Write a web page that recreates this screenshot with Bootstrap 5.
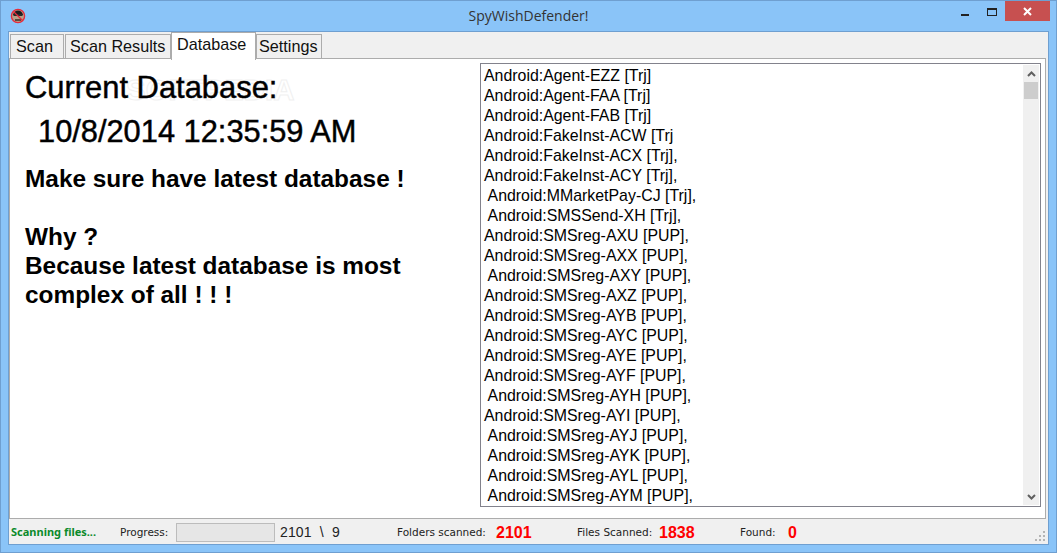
<!DOCTYPE html>
<html lang="en"><head><meta charset="utf-8"><title>SpyWishDefender!</title>
<link rel="stylesheet" href="https://cdn.jsdelivr.net/npm/bootstrap@5.3.0/dist/css/bootstrap.min.css">
<style>
html,body{height:553px;overflow:hidden}
body{font-family:"Liberation Sans",Arial,sans-serif;color:#000;background:#8ac4f8}
.app-window{width:1057px;height:553px;border:1px solid #6f9fd0;padding:0 7px 7px}
.title-bar{height:30px;flex:none}
.title-name{font-size:14px;color:#333;left:0;right:0;top:6px;line-height:18px;text-align:center;font-family:"Open Sans",sans-serif}
.app-icon{margin:7px 0 0 2px}
.win-ctrl{width:26px;height:20px}
.win-ctrl-max{width:27px}
.win-close{width:45px;background:#c75050;margin-right:-1px}
.client{flex:1 1 0;min-height:0;background:#f0f0f0;border:1px solid #6f9fd0}
.tab-strip{height:26px;flex:none;padding:2px 0 0 1px;gap:1px}
.tab-item{height:25px;padding:0 0 0 5px;background:#f0f0f0;border:1px solid #acacac;border-bottom:0;font-size:16.2px;line-height:22px;color:#111}
.tab-a{width:54px}
.tab-b{width:106px;padding-left:4px}
.tab-c{width:66px;padding-left:2px}
.tab-on{width:85px;height:28px;margin:-2px -1px 0 -1px;padding-left:5px;background:#fff;line-height:23px;position:relative;z-index:1}
.tab-page{flex:1 1 0;min-height:0;background:#fff;border:1px solid #acacac;margin-right:2px;padding:4px 4px 11px 15px}
.left-pane{width:455px;flex:none}
.db-head{font-size:30.9px;line-height:34px;margin:8px 0 0 0;-webkit-text-stroke:.45px #000;font-weight:400;position:relative}
.db-date{font-size:30.8px;line-height:34px;margin:10px 0 0 13px;-webkit-text-stroke:.45px #000;font-weight:400}
.db-note{font-size:24.4px;line-height:29px;font-weight:700;margin:0}
.db-note-a{margin-top:15px}
.db-note-b{margin-top:29px}
.mark-soft{left:101px;top:6px;font-size:29px;font-weight:700;color:#fff;-webkit-text-stroke:1px #f0f0f0;letter-spacing:.3px}
.db-list{border:1px solid #82828c;background:#fff;min-width:0}
.db-lines{padding:2px 0 0 3px;font-size:15.9px;line-height:20px;overflow:hidden;white-space:pre}
.sbar{width:16px;background:#f0f0f0;margin:1px}
.sbtn{height:17px;color:#606060}
.sthumb{height:17px;background:#cdcdcd;margin:0 1px}
.status-bar{height:25px;flex:none;font-family:"DejaVu Sans",sans-serif;font-size:10.5px;color:#222;padding-top:2px;position:relative}
.st-green{color:#0a8a2a;font-weight:700;font-family:"Noto Sans",sans-serif;font-size:11px;margin-left:2px;width:109px}
.st-prog-lbl{width:48px}
.st-progress{width:99px;height:19px;background:#e6e6e6;border:1px solid #bcbcbc;margin:0 5px 0 8px}
.st-count{font-family:"Liberation Sans",sans-serif;font-size:14px;width:117px;letter-spacing:.15px}
.st-folders{width:99px}
.st-files{width:82px}
.st-found{width:48px}
.st-red{color:#f00;font-weight:700;font-family:"Liberation Sans",sans-serif;font-size:16px}
.st-num{width:81px}
.grip{right:2px;bottom:2px}
</style></head>
<body>
<div class="app-window d-flex flex-column position-relative">
  <div class="title-bar d-flex justify-content-between position-relative">
    <svg class="app-icon" width="16" height="16" viewBox="0 0 16 16"><circle cx="8" cy="8" r="6.600" fill="#b8a088"/><path d="M3 7Q4 2.500 8 2.500T13 7Z" fill="#1c1c1c"/><rect x="3.500" y="6" width="9" height="2" fill="#2a2a2a"/><path d="M5 11h6v2H5z" fill="#5a4a40"/><circle cx="8" cy="8" r="6.600" fill="none" stroke="#e62a3a" stroke-width="1.300"/><path d="M3.500 3.500l9 9" stroke="#e62a3a" stroke-width="1.200"/></svg>
    <div class="title-name position-absolute">SpyWishDefender!</div>
    <div class="d-flex align-items-start">
      <div class="win-ctrl d-flex justify-content-center"><svg width="8" height="20" viewBox="0 0 8 20"><rect y="13" width="8" height="2" fill="#222"/></svg></div>
      <div class="win-ctrl win-ctrl-max d-flex justify-content-center"><svg width="10" height="20" viewBox="0 0 10 20"><rect x=".5" y="7.500" width="9" height="7" fill="none" stroke="#222"/><rect y="7" width="10" height="2" fill="#222"/></svg></div>
      <div class="win-ctrl win-close d-flex justify-content-center align-items-center"><svg width="9" height="9" viewBox="0 0 9 9"><path d="M1 1l7 7M8 1l-7 7" stroke="#fff" stroke-width="2"/></svg></div>
    </div>
  </div>
  <div class="client d-flex flex-column">
    <div class="tab-strip d-flex">
      <div class="tab-item tab-a">Scan</div><div class="tab-item tab-b">Scan Results</div><div class="tab-item tab-on">Database</div><div class="tab-item tab-c">Settings</div>
    </div>
    <div class="tab-page d-flex">
      <div class="left-pane position-relative">
        <div class="mark-soft position-absolute">SOFTPEDIA</div>
        <h1 class="db-head">Current Database:</h1>
        <div class="db-date">10/8/2014 12:35:59 AM</div>
        <p class="db-note db-note-a">Make sure have latest database !</p>
        <p class="db-note db-note-b">Why ?</p>
        <p class="db-note">Because latest database is most</p>
        <p class="db-note">complex of all ! ! !</p>
      </div>
      <div class="db-list flex-grow-1 d-flex">
        <div class="db-lines flex-grow-1">Android:Agent-EZZ [Trj]
Android:Agent-FAA [Trj]
Android:Agent-FAB [Trj]
Android:FakeInst-ACW [Trj
Android:FakeInst-ACX [Trj],
Android:FakeInst-ACY [Trj],
 Android:MMarketPay-CJ [Trj],
 Android:SMSSend-XH [Trj],
Android:SMSreg-AXU [PUP],
Android:SMSreg-AXX [PUP],
 Android:SMSreg-AXY [PUP],
Android:SMSreg-AXZ [PUP],
Android:SMSreg-AYB [PUP],
Android:SMSreg-AYC [PUP],
Android:SMSreg-AYE [PUP],
Android:SMSreg-AYF [PUP],
 Android:SMSreg-AYH [PUP],
Android:SMSreg-AYI [PUP],
 Android:SMSreg-AYJ [PUP],
 Android:SMSreg-AYK [PUP],
 Android:SMSreg-AYL [PUP],
 Android:SMSreg-AYM [PUP],</div>
        <div class="sbar d-flex flex-column">
          <div class="sbtn d-flex align-items-center justify-content-center"><svg width="9" height="6" viewBox="0 0 9 6"><path d="M1 5l3.500-3.500L8 5" fill="none" stroke="#606060" stroke-width="2"/></svg></div>
          <div class="sthumb"></div>
          <div class="flex-grow-1"></div>
          <div class="sbtn d-flex align-items-center justify-content-center"><svg width="9" height="6" viewBox="0 0 9 6"><path d="M1 1l3.500 3.500L8 1" fill="none" stroke="#606060" stroke-width="2"/></svg></div>
        </div>
      </div>
    </div>
    <div class="status-bar d-flex align-items-center">
      <div class="st-green">Scanning files...</div>
      <div class="st-prog-lbl">Progress:</div>
      <div class="st-progress"></div>
      <div class="st-count">2101 &nbsp;\ &nbsp;9</div>
      <div class="st-folders">Folders scanned:</div>
      <div class="st-red st-num">2101</div>
      <div class="st-files">Files Scanned:</div>
      <div class="st-red st-num">1838</div>
      <div class="st-found">Found:</div>
      <div class="st-red">0</div>
      <svg class="grip position-absolute" width="11" height="11" viewBox="0 0 11 11"><path d="M8 0h2v2H8zM4 4h2v2H4zM8 4h2v2H8zM0 8h2v2H0zM4 8h2v2H4zM8 8h2v2H8z" fill="#b4b4b4"/></svg>
    </div>
  </div>
</div>
<script src="https://cdn.jsdelivr.net/npm/bootstrap@5.3.0/dist/js/bootstrap.bundle.min.js"></script>
</body></html>
